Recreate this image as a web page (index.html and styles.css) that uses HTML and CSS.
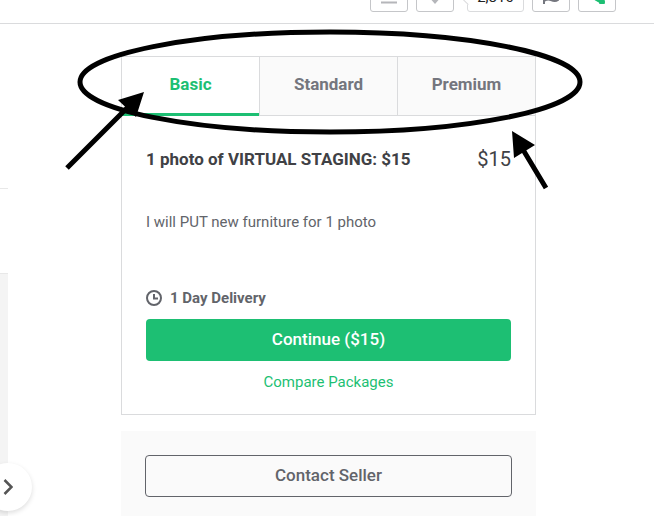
FILE: index.html
```html
<!DOCTYPE html>
<html lang="en">
<head>
  <meta charset="UTF-8">
  <meta name="viewport" content="width=device-width, initial-scale=1.0">
  <title>Virtual staging packages</title>
  <link rel="stylesheet" href="styles.css">
</head>
<body>
  <header class="toolbar">
    <button class="tool" aria-label="Menu">
      <svg width="16" height="20" viewBox="0 0 16 20"><path d="M0 8h16M0 13h16M0 18.500h16" stroke="#b5b6ba" stroke-width="2"/></svg>
    </button>
    <div class="favorite">
      <button class="tool" aria-label="Save to favorites">
        <svg width="16" height="20" viewBox="0 0 16 20"><path d="M8 20L1 12C-2 7 5 3 8 8c3-5 10-1 7 4z" fill="#b5b6ba"/></svg>
      </button>
      <span class="count">2,810</span>
    </div>
    <button class="tool" aria-label="Report">
      <svg width="18" height="20" viewBox="0 0 18 20"><path d="M2 20V8c3-2 5-1 7 0s4 1 7 0v8c-3 2-5 1-7 0s-4-1-7 1" fill="none" stroke="#74767e" stroke-width="2"/></svg>
    </button>
    <button class="tool" aria-label="Share">
      <svg width="18" height="20" viewBox="0 0 18 20"><path d="M14 6L4 12l10 6" fill="none" stroke="#1dbf73" stroke-width="3"/><path d="M8 14l7 4" stroke="#1dbf73" stroke-width="5"/><circle cx="14" cy="18" r="3" fill="#1dbf73"/><circle cx="14" cy="6" r="3" fill="#1dbf73"/></svg>
    </button>
  </header>

  <div class="page">
    <section class="gallery">
      <div class="gallery-top"></div>
      <div class="gallery-info"></div>
      <div class="gallery-image">
        <button class="next" aria-label="Next">
          <svg width="10" height="18" viewBox="0 0 10 18"><path d="M1.500 2L8.500 9l-7 7" fill="none" stroke="#555" stroke-width="2.500"/></svg>
        </button>
      </div>
    </section>

    <main class="sidebar">
      <section class="package">
        <nav class="tabs">
          <button class="tab active">Basic</button>
          <button class="tab">Standard</button>
          <button class="tab">Premium</button>
        </nav>
        <div class="package-body">
          <div class="package-head">
            <h3>1 photo of VIRTUAL STAGING: $15</h3>
            <span class="price">$15</span>
          </div>
          <p class="description">I will PUT new furniture for 1 photo</p>
          <div class="delivery">
            <svg width="16" height="16" viewBox="0 0 16 16"><circle cx="8" cy="8" r="7" fill="none" stroke="#62646a" stroke-width="2"/><path d="M8 4v4.500h4" fill="none" stroke="#62646a" stroke-width="2"/></svg>
            <span>1 Day Delivery</span>
          </div>
          <button class="continue">Continue ($15)</button>
          <a class="compare" href="#">Compare Packages</a>
        </div>
      </section>

      <section class="contact">
        <button class="contact-seller">Contact Seller</button>
      </section>

      <svg class="markup" width="530" height="170" viewBox="60 24 530 170">
        <ellipse cx="330" cy="82" rx="250" ry="50" fill="none" stroke="#000" stroke-width="5"/>
        <path d="M67 168L130 105M546 188L522 148" stroke="#000" stroke-width="5"/>
        <path d="M144 92L118 100L136 117zM512 131L535 145L514 158z"/>
      </svg>
    </main>
  </div>
</body>
</html>
```
FILE: styles.css
```css
:root {
  --green: #1dbf73;
  --dark: #404145;
  --text: #62646a;
  --muted: #74767e;
  --line: #dadbdd;
  --pale: #fafafa;
}
* { box-sizing: border-box; }
body { margin: 0; min-height: 100vh; display: flex; flex-direction: column; overflow: hidden; background: #fff; color: var(--text); font-family: Roboto, "Liberation Sans", sans-serif; font-size: 15px; }
button { font-family: inherit; cursor: pointer; }
h3, p { margin: 0; }

.toolbar { height: 24px; display: flex; justify-content: flex-end; align-items: flex-end; gap: 8px; padding: 0 38px 11px 0; border-bottom: 1px solid var(--line); overflow: hidden; }
.tool { width: 38px; height: 32px; display: flex; align-items: flex-end; justify-content: center; flex-shrink: 0; padding: 0 0 7px; background: #fff; border: 1px solid #c5c6c9; border-radius: 3px; }
.favorite { display: flex; gap: 13px; }
.count { position: relative; width: 57px; height: 32px; padding-top: 6px; text-align: center; line-height: 20px; color: #222; border: 1px solid var(--line); border-radius: 3px; }
.count::before { content: ""; position: absolute; left: -5px; top: 12px; width: 9px; height: 9px; background: #fff; border: solid var(--line); border-width: 0 0 1px 1px; transform: rotate(45deg); }

.page { flex: 1; display: flex; justify-content: space-between; padding-right: 118px; }
.gallery { width: 8px; display: flex; flex-direction: column; }
.gallery-top { height: 165px; border-bottom: 1px solid #e8e8e8; }
.gallery-info { height: 84px; }
.gallery-image { position: relative; flex: 1; background: #f4f4f4; border-top: 1px solid #e8e8e8; }
.next { position: absolute; right: -24px; bottom: 10px; width: 48px; height: 48px; display: flex; align-items: center; justify-content: center; padding: 0; background: #fff; border: 0; border-radius: 50%; box-shadow: 0 2px 5px #0002; }

.sidebar { position: relative; flex: 1; margin-left: 113px; padding-top: 32px; }
.package { border: 1px solid var(--line); }
.tabs { display: flex; }
.tab { flex: 1; height: 59px; padding: 0 0 4px; background: var(--pale); color: var(--muted); font-size: 17px; font-weight: 700; border: 0; border-bottom: 1px solid var(--line); border-left: 1px solid var(--line); }
.tab.active { background: #fff; color: var(--green); padding-bottom: 2px; border-bottom: 3px solid var(--green); border-left: 0; }
.package-body { display: flex; flex-direction: column; padding: 31px 24px 20px; }
.package-head { display: flex; justify-content: space-between; align-items: center; line-height: 24px; }
.package-head h3 { color: var(--dark); font-size: 17px; font-weight: 700; }
.price { color: var(--dark); font-size: 20px; }
.description { margin-top: 39px; line-height: 24px; }
.delivery { display: flex; align-items: center; gap: 8px; margin: 52px 0 9px; font-weight: 700; line-height: 24px; }
.continue { height: 42px; padding: 0 0 2px; background: var(--green); color: #fff; font-size: 17px; font-weight: 500; border: 0; border-radius: 4px; }
.compare { align-self: center; margin-top: 9px; color: var(--green); line-height: 24px; text-decoration: none; }

.contact { margin-top: 16px; padding: 24px; background: var(--pale); }
.contact-seller { width: 100%; height: 42px; padding: 0 0 2px; background: none; color: var(--text); font-size: 17px; font-weight: 500; border: 1px solid var(--text); border-radius: 4px; }

.markup { position: absolute; left: -61px; top: 0; pointer-events: none; }
```
